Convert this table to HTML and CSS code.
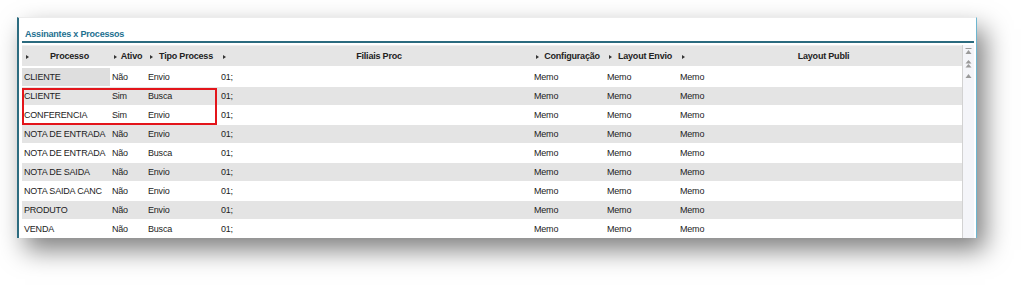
FILE: index.html
```html
<!DOCTYPE html>
<html lang="pt">
<head>
    <meta charset="UTF-8">
    <title>Assinantes x Processos</title>
    <link rel="stylesheet" href="styles.css">
</head>
<body>
    <div class="panel">
        <h2 class="panel-title">Assinantes x Processos</h2>

        <div class="grid-wrap">
            <div class="grid">
                <div class="grid-row grid-head">
                    <div class="head-cell"><i class="arrow"></i><span>Processo</span></div>
                    <div class="head-cell"><i class="arrow"></i><span>Ativo</span></div>
                    <div class="head-cell"><i class="arrow"></i><span>Tipo Process</span></div>
                    <div class="head-cell"><i class="arrow"></i><span>Filiais Proc</span></div>
                    <div class="head-cell"><i class="arrow"></i><span>Configuração</span></div>
                    <div class="head-cell"><i class="arrow"></i><span>Layout Envio</span></div>
                    <div class="head-cell"><i class="arrow"></i><span>Layout Publi</span></div>
                </div>

                <div class="grid-row">
                    <div class="cell selected">CLIENTE</div><div class="cell">Não</div><div class="cell">Envio</div><div class="cell">01;</div><div class="cell">Memo</div><div class="cell">Memo</div><div class="cell">Memo</div>
                </div>
                <div class="grid-row odd">
                    <div class="cell">CLIENTE</div><div class="cell">Sim</div><div class="cell">Busca</div><div class="cell">01;</div><div class="cell">Memo</div><div class="cell">Memo</div><div class="cell">Memo</div>
                </div>
                <div class="grid-row">
                    <div class="cell">CONFERENCIA</div><div class="cell">Sim</div><div class="cell">Envio</div><div class="cell">01;</div><div class="cell">Memo</div><div class="cell">Memo</div><div class="cell">Memo</div>
                </div>
                <div class="grid-row odd">
                    <div class="cell">NOTA DE ENTRADA</div><div class="cell">Não</div><div class="cell">Envio</div><div class="cell">01;</div><div class="cell">Memo</div><div class="cell">Memo</div><div class="cell">Memo</div>
                </div>
                <div class="grid-row">
                    <div class="cell">NOTA DE ENTRADA</div><div class="cell">Não</div><div class="cell">Busca</div><div class="cell">01;</div><div class="cell">Memo</div><div class="cell">Memo</div><div class="cell">Memo</div>
                </div>
                <div class="grid-row odd">
                    <div class="cell">NOTA DE SAIDA</div><div class="cell">Não</div><div class="cell">Envio</div><div class="cell">01;</div><div class="cell">Memo</div><div class="cell">Memo</div><div class="cell">Memo</div>
                </div>
                <div class="grid-row">
                    <div class="cell">NOTA SAIDA CANC</div><div class="cell">Não</div><div class="cell">Envio</div><div class="cell">01;</div><div class="cell">Memo</div><div class="cell">Memo</div><div class="cell">Memo</div>
                </div>
                <div class="grid-row odd">
                    <div class="cell">PRODUTO</div><div class="cell">Não</div><div class="cell">Envio</div><div class="cell">01;</div><div class="cell">Memo</div><div class="cell">Memo</div><div class="cell">Memo</div>
                </div>
                <div class="grid-row">
                    <div class="cell">VENDA</div><div class="cell">Não</div><div class="cell">Busca</div><div class="cell">01;</div><div class="cell">Memo</div><div class="cell">Memo</div><div class="cell">Memo</div>
                </div>

                <!-- annotation box -->
                <div class="highlight"></div>
            </div>

            <div class="scrollbar">
                <svg width="7" height="7" viewBox="0 0 7 7"><rect x="0.5" y="0" width="6" height="1" fill="#9a9a9a"/><path d="M3.5 2 L6.5 6 L0.5 6 Z" fill="#9a9a9a"/></svg>
                <svg width="7" height="8" viewBox="0 0 7 8"><path d="M3.5 0 L6.5 3.5 L0.5 3.5 Z" fill="#9a9a9a"/><path d="M3.5 4 L6.5 7.5 L0.5 7.5 Z" fill="#9a9a9a"/></svg>
                <svg width="7" height="6" viewBox="0 0 7 6"><path d="M3.5 1 L6.5 5 L0.5 5 Z" fill="#9a9a9a"/></svg>
            </div>
        </div>
    </div>
</body>
</html>
```

FILE: styles.css
```css
/* General Reset */
* {
    margin: 0;
    padding: 0;
    box-sizing: border-box;
}

html,
body {
    height: 100%;
}

body {
    font-family: 'Liberation Sans', Arial, sans-serif;
    background-color: white;
    color: #1c1c1c;
    font-size: 9px;
    letter-spacing: -0.2px;
    padding: 17px 0 0 17px;
}

.panel {
    width: 960px;
    height: 221px;
    padding: 10px 2px 0 3px;
    background-color: white;
    border-top: 1px solid #ececec;
    border-left: 2px solid #2d6c80;
    border-right: 1px solid #6db6d0;
    box-shadow: 8px 12px 24px rgba(0, 0, 0, 0.5);
    overflow: hidden;
}

.panel-title {
    font-size: 9px;
    font-weight: bold;
    color: #1d6f8f;
    line-height: 13px;
    padding-left: 3px;
    border-bottom: 2px solid #2b6b7f;
}

.grid-wrap {
    display: flex;
    margin-top: 2px;
}

.grid {
    position: relative;
    width: 940px;
}

.grid-row {
    display: grid;
    grid-template-columns: 88px 36px 73px 313px 73px 73px 284px;
    height: 18px;
    margin-bottom: 1px;
    line-height: 18px;
}

.grid-row.odd {
    background-color: #e4e4e4;
}

.grid-head {
    height: 21px;
    line-height: 21px;
    margin-bottom: 2px;
    background-color: #e5e5e5;
    border-top: 1px solid #f0f0f0;
    font-weight: bold;
    color: #222;
}

.head-cell {
    display: flex;
    align-items: center;
}

.head-cell span {
    flex: 1;
    text-align: center;
    white-space: nowrap;
}

.arrow {
    display: inline-block;
    margin-left: 4px;
    border-left: 3px solid #333;
    border-top: 2.5px solid transparent;
    border-bottom: 2.5px solid transparent;
}

.cell {
    padding-left: 2px;
    white-space: nowrap;
}

.cell.selected {
    background-color: #dedede;
}

.highlight {
    position: absolute;
    left: 0;
    top: 43px;
    width: 195px;
    height: 37px;
    border: 2px solid #e3151b;
}

.scrollbar {
    width: 12px;
    height: 196px;
    background-color: #f4f5f9;
    border-left: 1px solid #d2d2d2;
    display: flex;
    flex-direction: column;
    align-items: center;
    gap: 5px;
    padding-top: 3px;
}
```
